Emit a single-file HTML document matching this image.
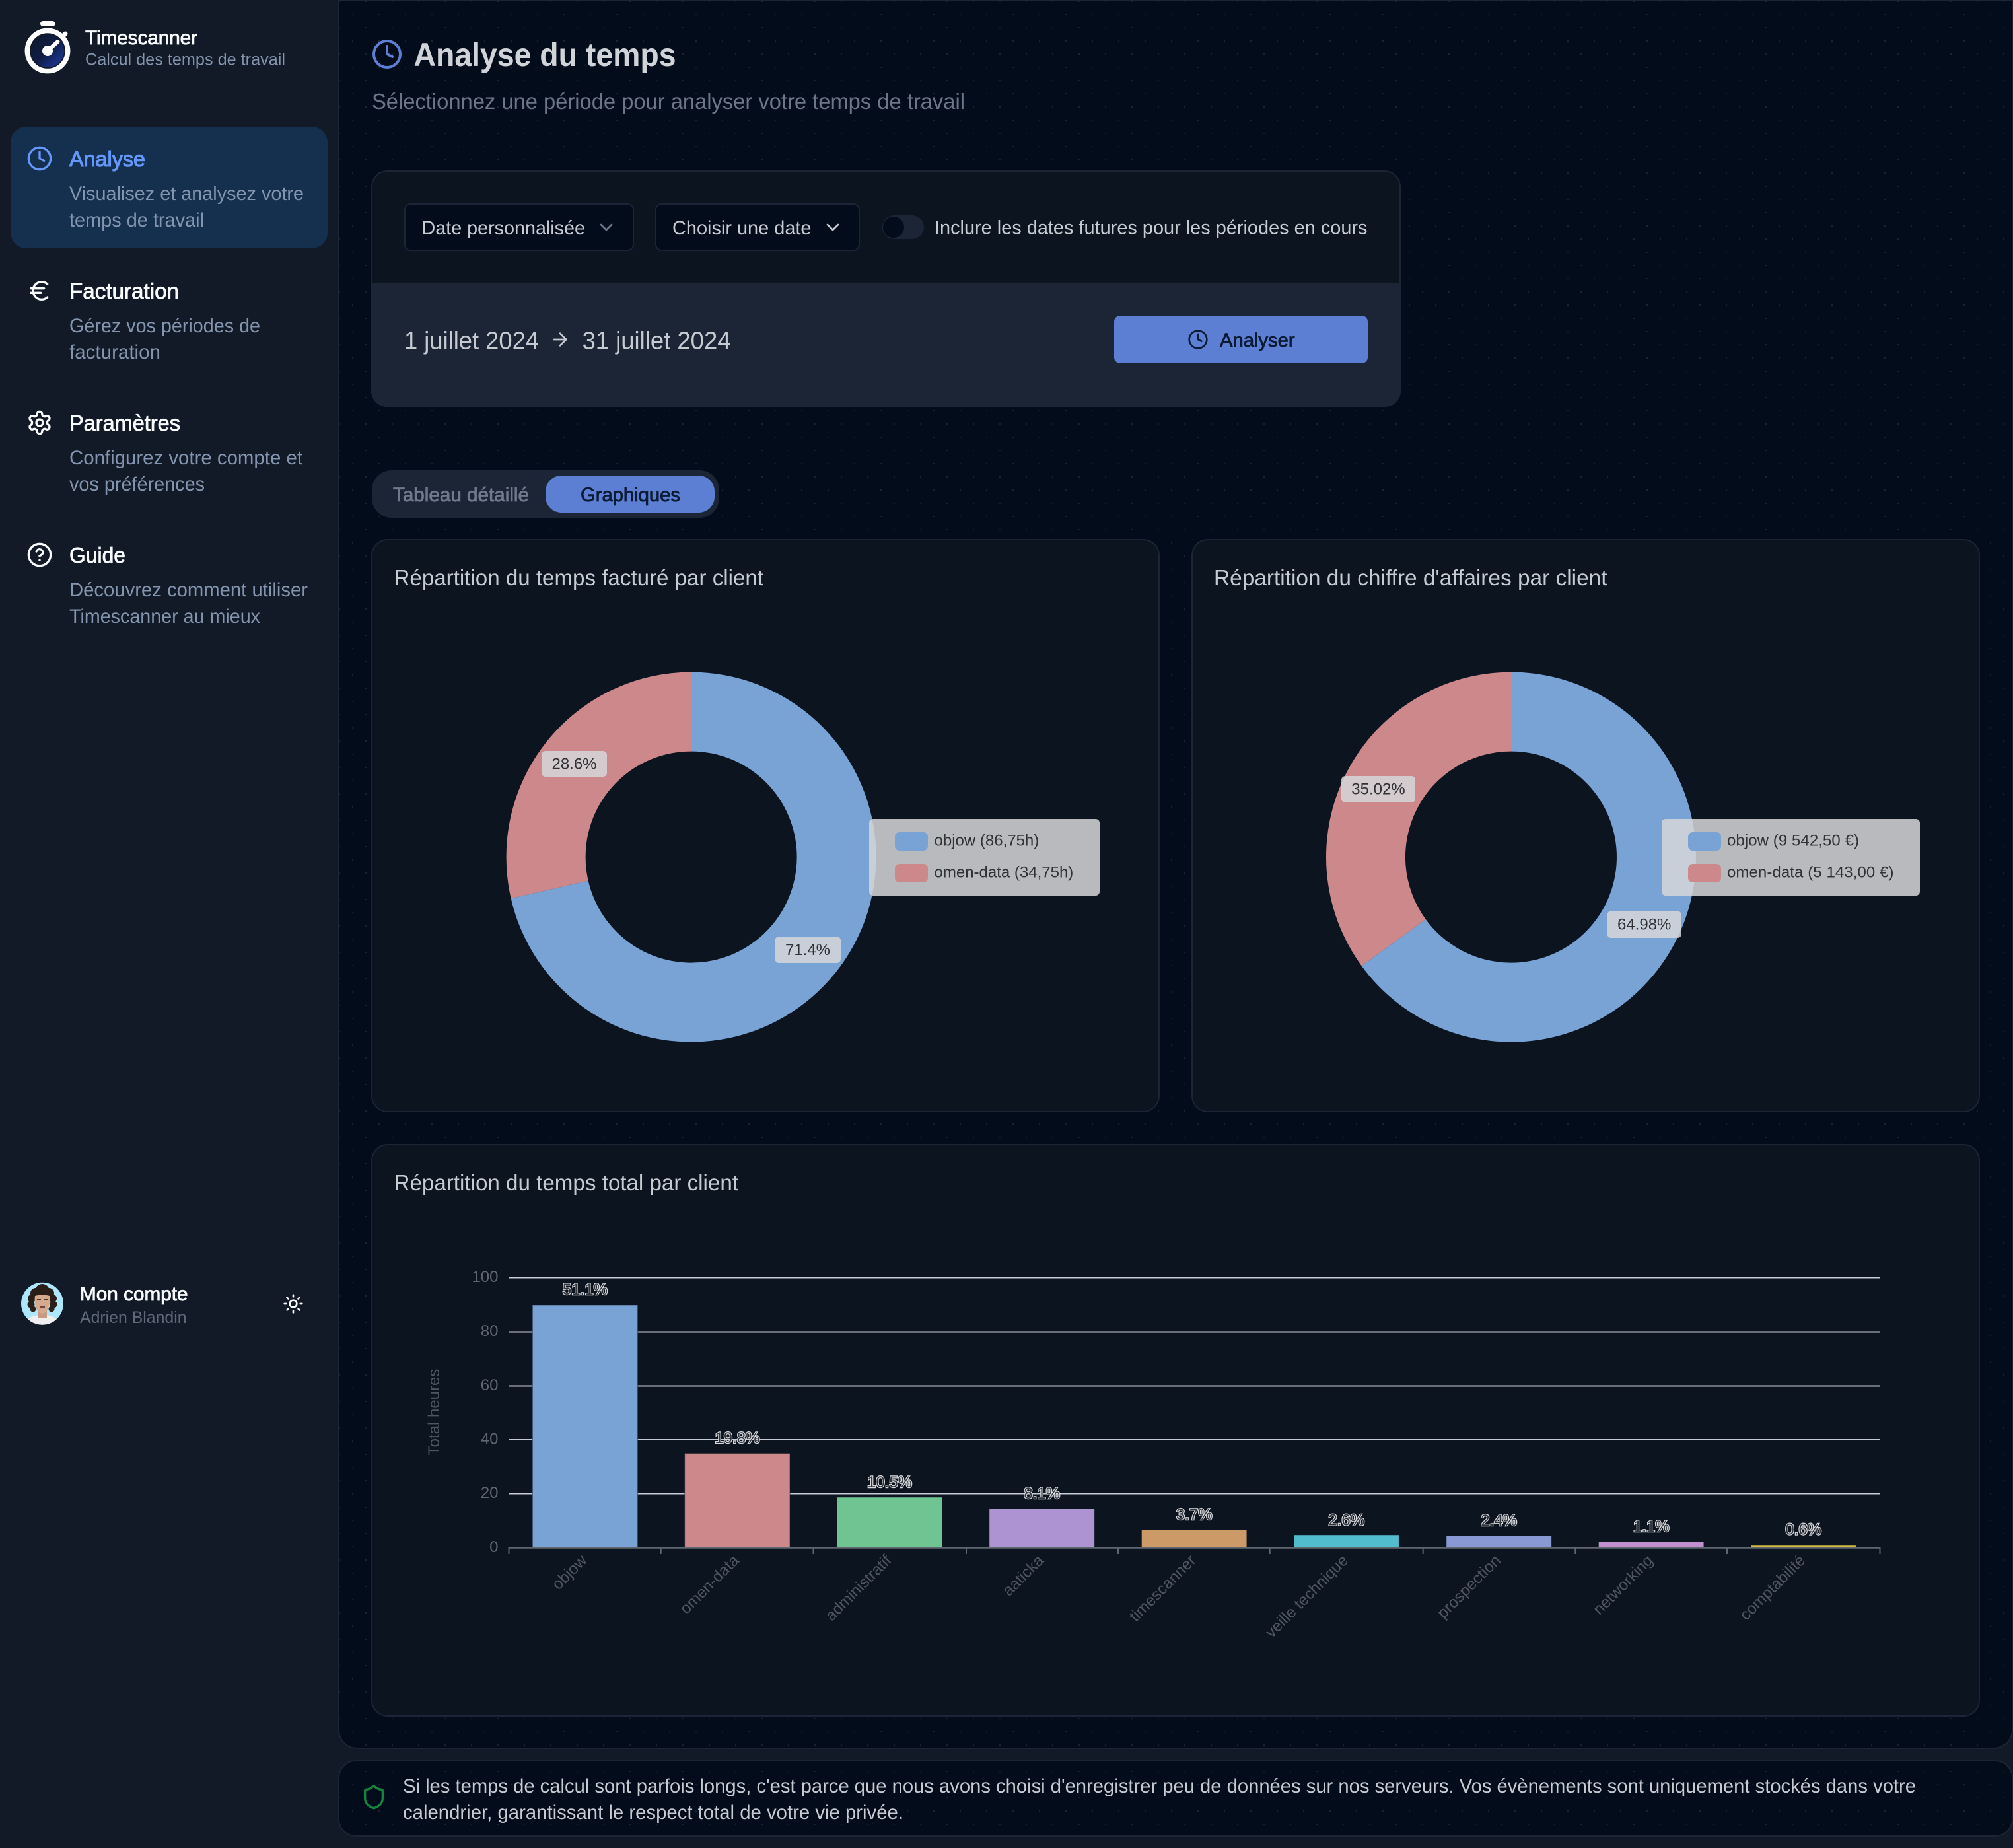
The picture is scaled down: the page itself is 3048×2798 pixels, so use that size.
<!DOCTYPE html>
<html lang="fr">
<head>
<meta charset="utf-8">
<title>Timescanner</title>
<style>
html,body{margin:0;padding:0;background:#121a27;width:3048px;height:2798px;overflow:hidden}
svg{display:block;font-family:"Liberation Sans",sans-serif}
.m{stroke:currentColor;stroke-width:.8px}
.ic{fill:none;stroke-linecap:round;stroke-linejoin:round}
.d{fill:#8394ae;font-size:29.4px}
.h{fill:#f8fafc;color:#f8fafc;font-size:33.6px}
.t{fill:#c6cad1;font-size:29.4px}
.c{fill:#c6cad1;font-size:33.6px}
.y{fill:#5f6670;font-size:24px;text-anchor:end}
.x{fill:#4f5662;font-size:24px;text-anchor:end}
.p{fill:#303236;font-size:24px;text-anchor:middle}
.l{fill:#303236;font-size:24px}
.b{fill:#34373d;stroke:#d6d8dc;stroke-width:2.4px;paint-order:stroke;font-size:24px;text-anchor:middle}
</style>
</head>
<body>
<svg xmlns="http://www.w3.org/2000/svg" width="3048" height="2798" viewBox="0 0 3048 2798">
<defs>
<pattern id="dots" width="40" height="40" patternUnits="userSpaceOnUse">
<rect x="33" y="1" width="2" height="2" fill="#182232"/>
<rect x="13" y="21" width="2" height="2" fill="#182232"/>
</pattern>
<linearGradient id="disc" x1="0" y1="0" x2="1" y2="1">
<stop offset="0" stop-color="#0f1626"/><stop offset=".5" stop-color="#101c45"/><stop offset="1" stop-color="#2140ac"/>
</linearGradient>
<clipPath id="av"><circle cx="64" cy="1973.7" r="32"/></clipPath>
</defs>

<rect width="3048" height="2798" fill="#121a27"/>

<!-- main panel -->
<path d="M513 1H3047V2619a28 28 0 0 1-28 28H541a28 28 0 0 1-28-28Z" fill="#030c1b" stroke="#1b2536" stroke-width="2"/>
<path d="M514 2H3046V2619a27 27 0 0 1-27 27H541a27 27 0 0 1-27-27Z" fill="url(#dots)"/>
<!-- footer panel -->
<rect x="513" y="2666" width="2534" height="114" rx="26" fill="#030c1b" stroke="#1b2536" stroke-width="2"/>
<rect x="514" y="2667" width="2532" height="112" rx="25" fill="url(#dots)"/>

<!-- logo -->
<circle cx="72" cy="77" r="25" fill="url(#disc)"/>
<circle cx="72" cy="77" r="30.6" fill="none" stroke="#fff" stroke-width="7.6"/>
<rect x="61" y="32" width="22.5" height="8" rx="4" fill="#fff"/>
<path d="M94 56l5-5" stroke="#fff" stroke-width="7" stroke-linecap="round"/>
<path d="M72 77L87.500 63" stroke="#fff" stroke-width="6" stroke-linecap="round"/>
<circle cx="72" cy="77" r="8" fill="#fff"/>
<text x="129" y="67" class="h m" style="font-size:29.4px" textLength="170" lengthAdjust="spacingAndGlyphs">Timescanner</text>
<text x="129" y="98.500" class="d" style="font-size:25.2px" textLength="303" lengthAdjust="spacingAndGlyphs">Calcul des temps de travail</text>

<!-- nav -->
<rect x="16" y="192" width="480" height="184" rx="24" fill="#15304f"/>
<g transform="translate(40 220) scale(1.6667)" class="ic" stroke="#6596fa" stroke-width="2"><circle cx="12" cy="12" r="10"/><polyline points="12 6 12 12 16 14"/></g>
<text x="105" y="252" class="h m" style="fill:#6596fa;color:#6596fa;stroke-width:1.1px" textLength="115" lengthAdjust="spacingAndGlyphs">Analyse</text>
<text x="105" y="303" class="d" textLength="355" lengthAdjust="spacingAndGlyphs">Visualisez et analysez votre</text>
<text x="105" y="343" class="d" textLength="204" lengthAdjust="spacingAndGlyphs">temps de travail</text>

<g transform="translate(40 420) scale(1.6667)" class="ic" stroke="#f8fafc" stroke-width="2"><path d="M4 10h12"/><path d="M4 14h9"/><path d="M19 6a7.700 7.700 0 0 0-5.200-2A7.900 7.900 0 0 0 6 12c0 4.400 3.500 8 7.800 8 2 0 3.800-.8 5.200-2"/></g>
<text x="105" y="452" class="h m" textLength="166" lengthAdjust="spacingAndGlyphs">Facturation</text>
<text x="105" y="503" class="d" textLength="289" lengthAdjust="spacingAndGlyphs">Gérez vos périodes de</text>
<text x="105" y="543" class="d" textLength="138" lengthAdjust="spacingAndGlyphs">facturation</text>

<g transform="translate(40 620) scale(1.6667)" class="ic" stroke="#f8fafc" stroke-width="2"><path d="M12.220 2h-.44a2 2 0 0 0-2 2v.18a2 2 0 0 1-1 1.730l-.43.25a2 2 0 0 1-2 0l-.15-.08a2 2 0 0 0-2.730.73l-.22.38a2 2 0 0 0 .73 2.730l.15.1a2 2 0 0 1 1 1.720v.51a2 2 0 0 1-1 1.740l-.15.09a2 2 0 0 0-.73 2.730l.22.38a2 2 0 0 0 2.730.73l.15-.08a2 2 0 0 1 2 0l.43.25a2 2 0 0 1 1 1.730V20a2 2 0 0 0 2 2h.44a2 2 0 0 0 2-2v-.18a2 2 0 0 1 1-1.730l.43-.25a2 2 0 0 1 2 0l.15.08a2 2 0 0 0 2.730-.73l.22-.39a2 2 0 0 0-.73-2.730l-.15-.08a2 2 0 0 1-1-1.740v-.5a2 2 0 0 1 1-1.740l.15-.09a2 2 0 0 0 .73-2.730l-.22-.38a2 2 0 0 0-2.730-.73l-.15.08a2 2 0 0 1-2 0l-.43-.25a2 2 0 0 1-1-1.730V4a2 2 0 0 0-2-2z"/><circle cx="12" cy="12" r="3"/></g>
<text x="105" y="652" class="h m" textLength="168" lengthAdjust="spacingAndGlyphs">Paramètres</text>
<text x="105" y="703" class="d" textLength="353" lengthAdjust="spacingAndGlyphs">Configurez votre compte et</text>
<text x="105" y="743" class="d" textLength="205" lengthAdjust="spacingAndGlyphs">vos préférences</text>

<g transform="translate(40 820) scale(1.6667)" class="ic" stroke="#f8fafc" stroke-width="2"><circle cx="12" cy="12" r="10"/><path d="M9.090 9a3 3 0 0 1 5.830 1c0 2-3 3-3 3"/><path d="M12 17h.01"/></g>
<text x="105" y="852" class="h m" textLength="85" lengthAdjust="spacingAndGlyphs">Guide</text>
<text x="105" y="903" class="d" textLength="361" lengthAdjust="spacingAndGlyphs">Découvrez comment utiliser</text>
<text x="105" y="943" class="d" textLength="289" lengthAdjust="spacingAndGlyphs">Timescanner au mieux</text>

<!-- account -->
<g clip-path="url(#av)">
<rect x="30" y="1940" width="70" height="70" fill="#aee6fb"/>
<path d="M38 2006c2-12 14-15 26-15s24 3 26 15Z" fill="#f0eeee"/>
<rect x="57" y="1980" width="14" height="15" fill="#c99a80"/>
<g fill="#2a1e19">
<circle cx="64" cy="1955" r="11"/><circle cx="54" cy="1958" r="8"/><circle cx="74" cy="1958" r="8"/>
<circle cx="48" cy="1966" r="6"/><circle cx="80" cy="1966" r="6"/><circle cx="47" cy="1975" r="5.500"/><circle cx="81" cy="1975" r="5.500"/><circle cx="50" cy="1982" r="4.500"/><circle cx="78" cy="1982" r="4.500"/>
</g>
<path d="M53 1962c7-2 15-2 22 0 1 7 0 14-2 19-2 5-6 8-9 8s-7-3-9-8c-2-5-3-12-2-19Z" fill="#d6a88c"/>
<path d="M56 1968h6M67 1968h6" stroke="#4b3a33" stroke-width="2"/>
<path d="M60 1979h8" stroke="#6e4a3c" stroke-width="2.500"/>
</g>
<text x="121" y="1969" class="h m" style="font-size:29.4px" textLength="163.600" lengthAdjust="spacingAndGlyphs">Mon compte</text>
<text x="121" y="2003" style="fill:#5d6879;font-size:25.2px" textLength="161.600" lengthAdjust="spacingAndGlyphs">Adrien Blandin</text>
<g transform="translate(428 1958) scale(1.3333)" class="ic" stroke="#f8fafc" stroke-width="2"><circle cx="12" cy="12" r="4"/><path d="M12 2v2"/><path d="M12 20v2"/><path d="m4.930 4.930 1.410 1.410"/><path d="m17.660 17.660 1.410 1.410"/><path d="M2 12h2"/><path d="M20 12h2"/><path d="m6.340 17.660-1.410 1.410"/><path d="m19.070 4.930-1.410 1.410"/></g>

<!-- header -->
<g transform="translate(562 58) scale(2)" class="ic" stroke="#5c7fd3" stroke-width="2"><circle cx="12" cy="12" r="10"/><polyline points="12 6 12 12 16 14"/></g>
<text x="626.500" y="100" style="fill:#d0d3d8;font-size:50px;font-weight:700" textLength="397" lengthAdjust="spacingAndGlyphs">Analyse du temps</text>
<text x="563" y="165" style="fill:#6b7688;font-size:33.6px" textLength="898" lengthAdjust="spacingAndGlyphs">Sélectionnez une période pour analyser votre temps de travail</text>

<!-- date card -->
<rect x="563" y="259" width="1557" height="356" rx="24" fill="#0c1420" stroke="#1b2536" stroke-width="2"/>
<path d="M562 428H2121V592a24 24 0 0 1-24 24H586a24 24 0 0 1-24-24Z" fill="#1b2536"/>

<rect x="613" y="309" width="346" height="70" rx="9" fill="#030c1b" stroke="#1b2536" stroke-width="2"/>
<text x="638.500" y="355" class="t" textLength="247.500" lengthAdjust="spacingAndGlyphs">Date personnalisée</text>
<polyline points="910,340 918,348 926,340" class="ic" stroke="#6b7688" stroke-width="2.670"/>
<rect x="993" y="309" width="308" height="70" rx="9" fill="#030c1b" stroke="#1b2536" stroke-width="2"/>
<text x="1018" y="355" class="t" textLength="210.500" lengthAdjust="spacingAndGlyphs">Choisir une date</text>
<polyline points="1253,340 1261,348 1269,340" class="ic" stroke="#c6cad1" stroke-width="2.670"/>

<rect x="1336" y="326" width="63" height="36" rx="18" fill="#1b2536"/>
<ellipse cx="1353" cy="344" rx="16.500" ry="16.500" fill="#030c1b" stroke="#1b2536" stroke-width="1"/>
<text x="1415" y="354.500" class="t" textLength="655.500" lengthAdjust="spacingAndGlyphs">Inclure les dates futures pour les périodes en cours</text>

<text x="612" y="528.500" style="fill:#c6cad1;font-size:37.800px" textLength="204" lengthAdjust="spacingAndGlyphs">1 juillet 2024</text>
<g transform="translate(832 498) scale(1.3333)" class="ic" stroke="#c6cad1" stroke-width="2"><path d="M5 12h14"/><path d="m12 5 7 7-7 7"/></g>
<text x="881.500" y="528.500" style="fill:#c6cad1;font-size:37.800px" textLength="225" lengthAdjust="spacingAndGlyphs">31 juillet 2024</text>

<rect x="1687" y="478" width="384" height="72" rx="9" fill="#5c7fd3"/>
<g transform="translate(1798 498) scale(1.3333)" class="ic" stroke="#0b1a35" stroke-width="2"><circle cx="12" cy="12" r="10"/><polyline points="12 6 12 12 16 14"/></g>
<text x="1847" y="525" class="t m" style="fill:#0b1a35;color:#0b1a35" textLength="113.600" lengthAdjust="spacingAndGlyphs">Analyser</text>

<!-- tabs -->
<rect x="563" y="712" width="526" height="72" rx="30" fill="#1b2536"/>
<rect x="826" y="720" width="256" height="56" rx="24" fill="#5c7fd3"/>
<text x="595" y="759" class="t m" style="fill:#6f7a8c;color:#6f7a8c" textLength="206" lengthAdjust="spacingAndGlyphs">Tableau détaillé</text>
<text x="879" y="759" class="t m" style="fill:#0b1a35;color:#0b1a35" textLength="151" lengthAdjust="spacingAndGlyphs">Graphiques</text>

<!-- donut card 1 -->
<rect x="563" y="817" width="1192" height="866" rx="24" fill="#0c1420" stroke="#1b2536" stroke-width="2"/>
<text x="596.500" y="886" class="c" textLength="559.500" lengthAdjust="spacingAndGlyphs">Répartition du temps facturé par client</text>
<path d="M1046.600 1017.600A280 280 0 1 1 773.700 1360.400L890.700 1333.500A160 160 0 1 0 1046.600 1137.600Z" fill="#79a2d5"/>
<path d="M773.700 1360.400A280 280 0 0 1 1046.600 1017.600V1137.600A160 160 0 0 0 890.700 1333.500Z" fill="#cc888b"/>
<rect x="820" y="1137" width="99" height="39" rx="6" fill="#d5d6d8" fill-opacity=".86"/>
<text x="869.500" y="1164.500" class="p">28.6%</text>
<rect x="1173.500" y="1418" width="99.500" height="40" rx="6" fill="#d5d6d8" fill-opacity=".86"/>
<text x="1223" y="1446" class="p">71.4%</text>
<rect x="1316" y="1240" width="349" height="116" rx="6" fill="#d5d6d8" fill-opacity=".86"/>
<rect x="1355" y="1260" width="50" height="28" rx="7" fill="#79a2d5"/>
<rect x="1355" y="1308" width="50" height="28" rx="7" fill="#cc888b"/>
<text x="1414.500" y="1280.500" class="l">objow (86,75h)</text>
<text x="1414.500" y="1328.500" class="l">omen-data (34,75h)</text>

<!-- donut card 2 -->
<rect x="1805" y="817" width="1192" height="866" rx="24" fill="#0c1420" stroke="#1b2536" stroke-width="2"/>
<text x="1838" y="886" class="c" textLength="595.500" lengthAdjust="spacingAndGlyphs">Répartition du chiffre d'affaires par client</text>
<path d="M2288 1017.600A280 280 0 1 1 2061.700 1462.500L2158.700 1391.900A160 160 0 1 0 2288 1137.600Z" fill="#79a2d5"/>
<path d="M2061.700 1462.500A280 280 0 0 1 2288 1017.600V1137.600A160 160 0 0 0 2158.700 1391.900Z" fill="#cc888b"/>
<rect x="2031" y="1175" width="112" height="40" rx="6" fill="#d5d6d8" fill-opacity=".86"/>
<text x="2087" y="1202.500" class="p">35.02%</text>
<rect x="2433.500" y="1379.500" width="112.500" height="40.500" rx="6" fill="#d5d6d8" fill-opacity=".86"/>
<text x="2489.700" y="1407.500" class="p">64.98%</text>
<rect x="2516" y="1240" width="391" height="116" rx="6" fill="#d5d6d8" fill-opacity=".86"/>
<rect x="2556" y="1260" width="50" height="28" rx="7" fill="#79a2d5"/>
<rect x="2556" y="1308" width="50" height="28" rx="7" fill="#cc888b"/>
<text x="2615" y="1280.500" class="l" textLength="200" lengthAdjust="spacing">objow (9 542,50 €)</text>
<text x="2615" y="1328.500" class="l" textLength="252.500" lengthAdjust="spacing">omen-data (5 143,00 €)</text>

<!-- bar card -->
<rect x="563" y="1733" width="2434" height="865" rx="24" fill="#0c1420" stroke="#1b2536" stroke-width="2"/>
<text x="596.500" y="1802" class="c" textLength="521.500" lengthAdjust="spacingAndGlyphs">Répartition du temps total par client</text>

<g stroke="#c6cad4" stroke-width="2">
<path d="M770.500 1934.500H2846M770.500 2016.500H2846M770.500 2098.500H2846M770.500 2180H2846M770.500 2261.500H2846"/>
</g>
<g stroke="#0c1420" stroke-opacity=".45" stroke-width="1">
<rect x="806.300" y="1976" width="159.300" height="367" fill="#79a2d5"/>
<rect x="1036.700" y="2200.500" width="159.300" height="142.500" fill="#cc888b"/>
<rect x="1267.300" y="2267" width="159.300" height="76" fill="#6fc492"/>
<rect x="1498" y="2284.500" width="159.300" height="58.500" fill="#ae93d2"/>
<rect x="1728.500" y="2316" width="159.300" height="27" fill="#cc9a66"/>
<rect x="1959" y="2324" width="159.300" height="19" fill="#52bccf"/>
<rect x="2190" y="2325" width="159.300" height="18" fill="#8899d3"/>
<rect x="2420.500" y="2334" width="159.300" height="9" fill="#c18fd0"/>
<rect x="2651" y="2339" width="159.300" height="4" fill="#d4b940"/>
</g>
<g stroke="#5f6670" stroke-width="2" fill="none">
<path d="M770.500 2343.700H2847"/>
<path d="M770.500 2343v10M1000.700 2343v10M1231.500 2343v10M1463 2343v10M1693 2343v10M1922.700 2343v10M2154.700 2343v10M2385.300 2343v10M2615 2343v10M2846.500 2343v10"/>
</g>
<text x="754.500" y="1941" class="y">100</text>
<text x="754.500" y="2023" class="y">80</text>
<text x="754.500" y="2105" class="y">60</text>
<text x="754.500" y="2186.500" class="y">40</text>
<text x="754.500" y="2268" class="y">20</text>
<text x="754.500" y="2350" class="y">0</text>
<text transform="translate(665 2138) rotate(-90)" text-anchor="middle" style="fill:#4f5662;font-size:24px">Total heures</text>

<text x="885.900" y="1960" class="b">51.1%</text>
<text x="1116.400" y="2185" class="b">19.8%</text>
<text x="1347" y="2252" class="b">10.5%</text>
<text x="1577.700" y="2269" class="b">8.1%</text>
<text x="1808.200" y="2301" class="b">3.7%</text>
<text x="2038.700" y="2309.500" class="b">2.6%</text>
<text x="2269.600" y="2310" class="b">2.4%</text>
<text x="2500.200" y="2319" class="b">1.1%</text>
<text x="2730.700" y="2323.500" class="b">0.6%</text>

<text x="890" y="2364" class="x" transform="rotate(-45 890 2364)">objow</text>
<text x="1120.400" y="2364" class="x" transform="rotate(-45 1120.400 2364)">omen-data</text>
<text x="1351" y="2364" class="x" transform="rotate(-45 1351 2364)">administratif</text>
<text x="1581.700" y="2364" class="x" transform="rotate(-45 1581.700 2364)">aaticka</text>
<text x="1812.200" y="2364" class="x" transform="rotate(-45 1812.200 2364)">timescanner</text>
<text x="2042.700" y="2364" class="x" transform="rotate(-45 2042.700 2364)">veille technique</text>
<text x="2273.600" y="2364" class="x" transform="rotate(-45 2273.600 2364)">prospection</text>
<text x="2504.200" y="2364" class="x" transform="rotate(-45 2504.200 2364)">networking</text>
<text x="2734.700" y="2364" class="x" transform="rotate(-45 2734.700 2364)">comptabilité</text>

<!-- footer -->
<g transform="translate(546 2701) scale(1.6667)" class="ic" stroke="#14863e" stroke-width="2"><path d="M20 13c0 5-3.500 7.500-7.660 8.950a1 1 0 0 1-.67-.01C7.500 20.500 4 18 4 13V6a1 1 0 0 1 1-1c2 0 4.500-1.200 6.240-2.720a1.170 1.170 0 0 1 1.520 0C14.510 3.810 17 5 19 5a1 1 0 0 1 1 1z"/></g>
<text x="610" y="2714" class="t" textLength="2291" lengthAdjust="spacingAndGlyphs">Si les temps de calcul sont parfois longs, c'est parce que nous avons choisi d'enregistrer peu de données sur nos serveurs. Vos évènements sont uniquement stockés dans votre</text>
<text x="610" y="2754" class="t" textLength="758" lengthAdjust="spacingAndGlyphs">calendrier, garantissant le respect total de votre vie privée.</text>
</svg>
</body>
</html>
